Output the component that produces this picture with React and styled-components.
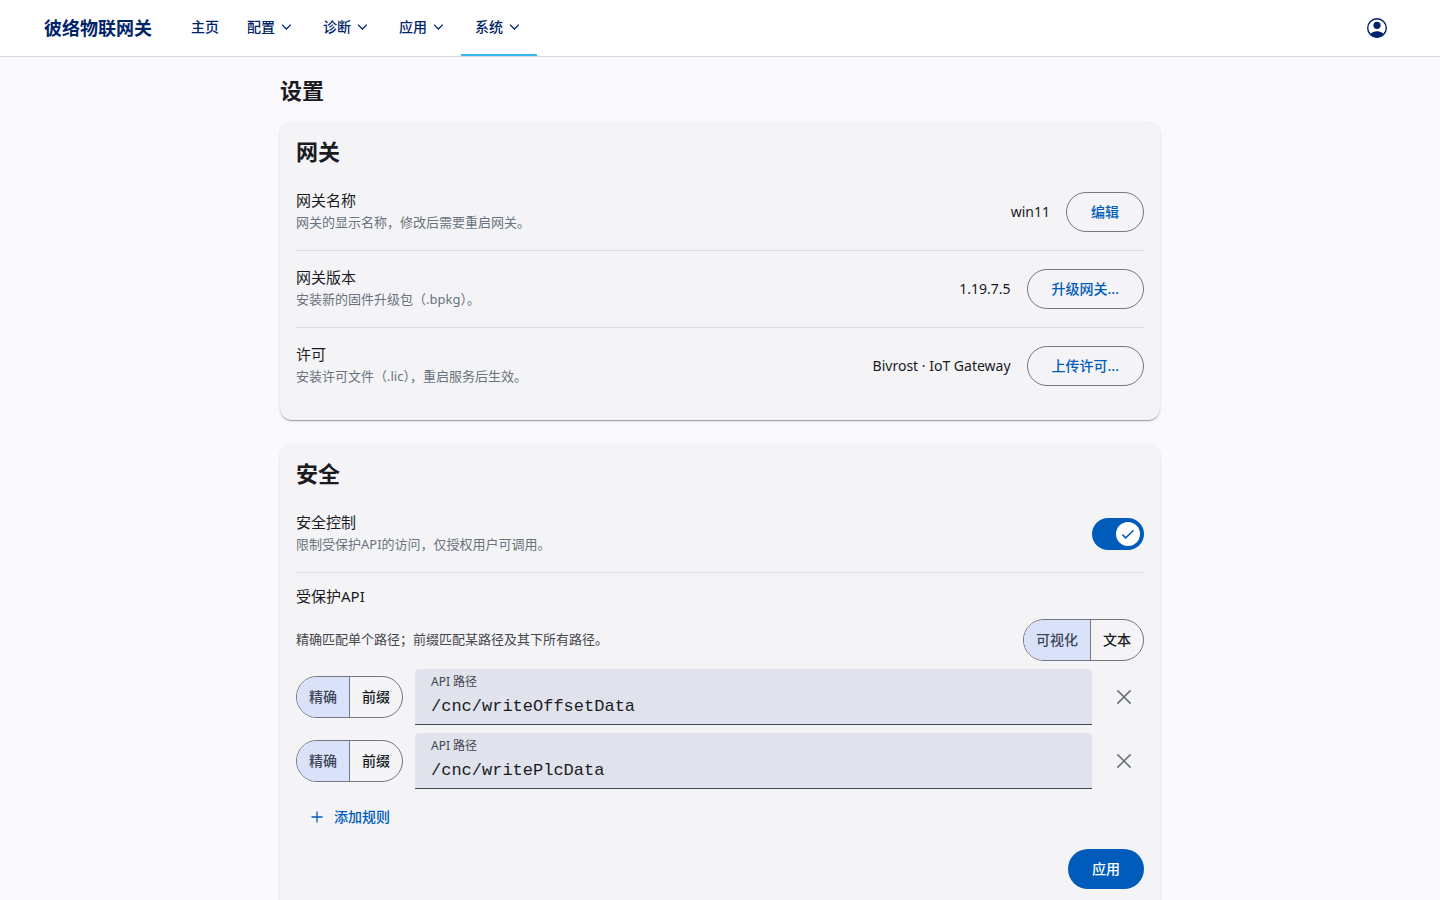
import React, { useState } from "react";
import styled, { createGlobalStyle, css } from "styled-components";

const Global = createGlobalStyle`
  *, *::before, *::after { box-sizing: border-box; }
  body {
    margin: 0;
    background: #faf9fe;
    color: #1a1b1f;
    font-family: "Noto Sans", "Noto Sans CJK SC", sans-serif;
    font-size: 14px;
  }
  button, input { font-family: inherit; }
  h1, h2, h3, p { margin: 0; }
`;

const Header = styled.header`
  display: flex;
  align-items: center;
  height: 57px;
  padding: 0 43px 0 44px;
  background: #fff;
  border-bottom: 1px solid #dcdcdf;
`;

const Brand = styled.a`
  margin-right: 25px;
  color: #00246a;
  font-size: 18px;
  font-weight: 600;
  line-height: 28px;
  text-decoration: none;
`;

const Nav = styled.nav`
  display: flex;
  flex: 1;
  align-self: stretch;
`;

const navItem = css`
  display: flex;
  align-items: center;
  gap: 4px;
  padding: 0 14px;
  border: 0;
  border-bottom: 2px solid ${(p) => (p.$active ? "#36b8f5" : "transparent")};
  background: none;
  color: #00246a;
  font-size: 14px;
  font-weight: 500;
  line-height: 20px;
  text-decoration: none;
`;

const NavLink = styled.a`${navItem}`;
const NavButton = styled.button`
  ${navItem}
  cursor: pointer;
`;

const IconButton = styled.button`
  display: flex;
  flex: none;
  align-items: center;
  justify-content: center;
  width: 40px;
  height: 40px;
  padding: 0;
  border: 0;
  border-radius: 20px;
  background: none;
  color: ${(p) => p.$color};
  cursor: pointer;
`;

const Main = styled.main`
  max-width: 912px;
  margin: 0 auto;
  padding: 19px 16px 24px;
`;

const PageTitle = styled.h1`
  margin-bottom: 18px;
  font-size: 22px;
  font-weight: 600;
  line-height: 28px;
`;

const Card = styled.section`
  padding: 15px 16px 16px;
  border-radius: 12px;
  background: #f4f3f6;
  box-shadow: 0 2px 1px -1px rgba(0, 0, 0, 0.2), 0 1px 1px rgba(0, 0, 0, 0.14), 0 1px 3px rgba(0, 0, 0, 0.12);

  & + & { margin-top: 24px; }
`;

const CardTitle = styled.h2`
  margin-bottom: 9px;
  font-size: 22px;
  font-weight: 600;
  line-height: 28px;
`;

const Row = styled.div`
  display: flex;
  align-items: center;
  gap: 16px;
  padding: 15px 0;
  border-bottom: ${(p) => (p.$last ? "0" : "1px solid #dddde1")};
`;

const RowText = styled.div`
  flex: 1;
  padding-bottom: 2px;
`;

const Label = styled.h3`
  font-size: 15px;
  font-weight: 400;
  line-height: 22px;
`;

const Description = styled.p`
  color: #69737d;
  font-size: 13px;
  line-height: 22px;
`;

const Value = styled.span`
  font-size: 14px;
  line-height: 20px;
`;

const Button = styled.button`
  display: flex;
  align-items: center;
  gap: 8px;
  height: 40px;
  padding: 0 ${(p) => (p.$variant === "text" ? 12 : 24)}px;
  border: ${(p) => (p.$variant ? "0" : "1px solid #74777f")};
  border-radius: 20px;
  background: ${(p) => (p.$variant === "filled" ? "#005cbb" : "transparent")};
  color: ${(p) => (p.$variant === "filled" ? "#fff" : "#005cbb")};
  font-size: 14px;
  font-weight: 500;
  line-height: 20px;
  cursor: pointer;
`;

const SwitchTrack = styled.label`
  display: flex;
  align-items: center;
  width: 52px;
  height: 32px;
  padding: 4px;
  border-radius: 16px;
  background: #c4c6d0;

  &:has(input:checked) {
    justify-content: flex-end;
    background: #005cbb;
  }
  &:has(input:focus-visible) { outline: 2px solid #00246a; }
`;

const HiddenInput = styled.input`
  width: 1px;
  height: 1px;
  margin: 0;
  appearance: none;
`;

const SwitchHandle = styled.span`
  display: flex;
  align-items: center;
  justify-content: center;
  width: 24px;
  height: 24px;
  border-radius: 12px;
  background: #fff;
  color: #005cbb;
`;

const ApiSection = styled.div`
  display: flex;
  flex-direction: column;
  gap: 12px;
  padding: 12px 0 16px;
`;

const Rules = styled.div`
  display: flex;
  flex-direction: column;
  align-items: stretch;
  gap: 8px;
`;

const HintRow = styled.div`
  display: flex;
  align-items: center;
  justify-content: space-between;
  gap: 16px;
`;

const Hint = styled.p`
  padding-bottom: 2px;
  color: #44474e;
  font-size: 13px;
  line-height: 22px;
`;

const RuleRow = styled.div`
  display: flex;
  align-items: center;
  gap: 12px;
`;

const Segments = styled.div`
  display: flex;
  flex: none;
  height: 42px;
  overflow: hidden;
  border: 1px solid #74777f;
  border-radius: 21px;
`;

const Segment = styled.button`
  padding: 0 12px;
  border: 0;
  background: ${(p) => (p.$selected ? "#dae2f9" : "transparent")};
  color: ${(p) => (p.$selected ? "#3e4759" : "#1a1b1f")};
  font-size: 14px;
  font-weight: 500;
  line-height: 20px;
  cursor: pointer;

  & + & { border-left: 1px solid #74777f; }
`;

const Field = styled.label`
  display: flex;
  flex: 1;
  flex-direction: column;
  min-width: 0;
  height: 56px;
  padding: 4px 16px 3px;
  border-bottom: 1px solid #44474e;
  border-radius: 4px 4px 0 0;
  background: #e0e2ec;
`;

const FieldLabel = styled.span`
  color: #44474e;
  font-size: 12px;
  line-height: 18px;
`;

const FieldInput = styled.input`
  width: 100%;
  height: 30px;
  padding: 0;
  border: 0;
  outline: 0;
  background: none;
  color: #1a1b1f;
  font-family: "Liberation Mono", monospace;
  font-size: 17px;
`;

const AddLine = styled.div`
  display: flex;
`;

const Actions = styled.div`
  display: flex;
  justify-content: flex-end;
`;

function Icon({ size, width, d }) {
  return (
    <svg width={size} height={size} viewBox={`0 0 ${size} ${size}`} fill="none" stroke="currentColor" strokeWidth={width} aria-hidden="true">
      <path d={d} />
    </svg>
  );
}

const Chevron = () => <Icon size={16} width={1.3} d="M3 5.600 7.400 10l4.400-4.400" />;
const Plus = () => <Icon size={18} width={1.3} d="M9 3.5v11M3.5 9h11" />;
const Cross = () => <Icon size={24} width={1.5} d="m5.4 5.4 13.2 13.2M18.6 5.4 5.4 18.6" />;
const Check = () => <Icon size={16} width={1.5} d="m2.4 8.6 3.3 3.3 7.9-7.7" />;

function Account() {
  return (
    <svg width="24" height="24" viewBox="0 0 24 24" aria-hidden="true">
      <circle cx="12" cy="12" r="9.3" fill="none" stroke="currentColor" strokeWidth="1.4" />
      <circle cx="12" cy="9.3" r="3.6" fill="currentColor" />
      <path d="M5 18.2c1.8-2 4.2-3 7-3s5.2 1 7 3A9.3 9.3 0 0 1 5 18.2Z" fill="currentColor" />
    </svg>
  );
}

function Segmented({ options, label }) {
  const [selected, setSelected] = useState(options[0]);
  return (
    <Segments role="group" aria-label={label}>
      {options.map((o) => (
        <Segment key={o} type="button" $selected={o === selected} aria-pressed={o === selected} onClick={() => setSelected(o)}>
          {o}
        </Segment>
      ))}
    </Segments>
  );
}

const menus = ["配置", "诊断", "应用", "系统"];

const gatewayRows = [
  { label: "网关名称", description: "网关的显示名称，修改后需要重启网关。", value: "win11", action: "编辑" },
  { label: "网关版本", description: "安装新的固件升级包（.bpkg）。", value: "1.19.7.5", action: "升级网关..." },
  { label: "许可", description: "安装许可文件（.lic），重启服务后生效。", value: "Bivrost · IoT Gateway", action: "上传许可..." },
];

const initialRules = ["/cnc/writeOffsetData", "/cnc/writePlcData"];

export default function App() {
  const [rules, setRules] = useState(initialRules);
  return (
    <>
      <Global />
      <Header>
        <Brand href="#">彼络物联网关</Brand>
        <Nav>
          <NavLink href="#">主页</NavLink>
          {menus.map((m) => (
            <NavButton key={m} type="button" $active={m === "系统"}>
              {m}
              <Chevron />
            </NavButton>
          ))}
        </Nav>
        <IconButton type="button" aria-label="账户" $color="#00246a">
          <Account />
        </IconButton>
      </Header>
      <Main>
        <PageTitle>设置</PageTitle>
        <Card>
          <CardTitle>网关</CardTitle>
          {gatewayRows.map((r, i) => (
            <Row key={r.label} $last={i === gatewayRows.length - 1}>
              <RowText>
                <Label>{r.label}</Label>
                <Description>{r.description}</Description>
              </RowText>
              <Value>{r.value}</Value>
              <Button type="button">{r.action}</Button>
            </Row>
          ))}
        </Card>
        <Card>
          <CardTitle>安全</CardTitle>
          <Row>
            <RowText>
              <Label>安全控制</Label>
              <Description>限制受保护API的访问，仅授权用户可调用。</Description>
            </RowText>
            <SwitchTrack>
              <HiddenInput type="checkbox" role="switch" defaultChecked aria-label="安全控制" />
              <SwitchHandle>
                <Check />
              </SwitchHandle>
            </SwitchTrack>
          </Row>
          <ApiSection>
            <Label>受保护API</Label>
            <Rules>
              <HintRow>
                <Hint>精确匹配单个路径；前缀匹配某路径及其下所有路径。</Hint>
                <Segmented label="编辑模式" options={["可视化", "文本"]} />
              </HintRow>
              {rules.map((path, i) => (
                <RuleRow key={i}>
                  <Segmented label="匹配方式" options={["精确", "前缀"]} />
                  <Field>
                    <FieldLabel>API 路径</FieldLabel>
                    <FieldInput
                      type="text"
                      value={path}
                      onChange={(e) => setRules(rules.map((r, j) => (j === i ? e.target.value : r)))}
                    />
                  </Field>
                  <IconButton type="button" aria-label="删除" $color="#66707a" onClick={() => setRules(rules.filter((_, j) => j !== i))}>
                    <Cross />
                  </IconButton>
                </RuleRow>
              ))}
              <AddLine>
                <Button type="button" $variant="text" onClick={() => setRules([...rules, ""])}>
                  <Plus />
                  添加规则
                </Button>
              </AddLine>
            </Rules>
            <Actions>
              <Button type="button" $variant="filled">应用</Button>
            </Actions>
          </ApiSection>
        </Card>
      </Main>
    </>
  );
}
